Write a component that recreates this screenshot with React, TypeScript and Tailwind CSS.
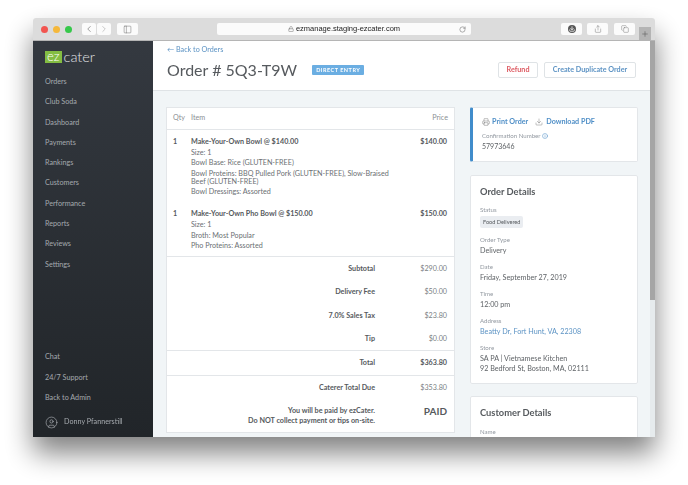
import { ChevronLeft, ChevronRight, Copy, Info, Lock, PanelLeft, Plus, Printer, RotateCw, Share, Download, UserCircle } from "lucide-react";

const topNav = ["Orders", "Club Soda", "Dashboard", "Payments", "Rankings", "Customers", "Performance", "Reports", "Reviews", "Settings"];
const bottomNav = ["Chat", "24/7 Support", "Back to Admin"];

const totals = [
  { label: "Subtotal", value: "$290.00" },
  { label: "Delivery Fee", value: "$50.00" },
  { label: "7.0% Sales Tax", value: "$23.80" },
  { label: "Tip", value: "$0.00" },
];

const Field = ({ label, children }: { label: string; children: React.ReactNode }) => (
  <div className="mt-[7px]">
    <div className="text-[6.1px] leading-[8px] text-[#9298a0]">{label}</div>
    <div className="mt-[2px] text-[7.2px] leading-[10px] text-[#5f6367]">{children}</div>
  </div>
);

const ToolButton = ({ children, className = "" }: { children: React.ReactNode; className?: string }) => (
  <div className={`flex h-[12px] items-center justify-center rounded-[2px] bg-[#fbfbfb] text-[#666] ${className}`}>{children}</div>
);

export default function App() {
  return (
    <div className="h-[485px] w-[688px] overflow-hidden bg-white pl-[33px] pt-[18px] font-['Lato','Liberation_Sans',sans-serif]">
      <div className="flex h-[419px] w-[622px] flex-col overflow-hidden rounded-t-[3px] opacity-[0.995] shadow-[0_16px_28px_rgba(0,0,0,0.5)] blur-[0.3px]">
        <div className="flex h-[23px] shrink-0 items-center border-b border-[#b5b5b5] bg-[#dcdcdc] pl-[8px]">
          <div className="flex gap-[5px]">
            <span className="size-[7px] rounded-full bg-[#f2544f]" />
            <span className="size-[7px] rounded-full bg-[#f5b83a]" />
            <span className="size-[7px] rounded-full bg-[#35c84a]" />
          </div>
          <div className="ml-[10px] flex gap-px">
            <ToolButton className="w-[14px]"><ChevronLeft size={10} strokeWidth={1.5} /></ToolButton>
            <ToolButton className="w-[14px] text-[#aaa]"><ChevronRight size={10} strokeWidth={1.5} /></ToolButton>
          </div>
          <ToolButton className="ml-[6px] w-[21px]"><PanelLeft size={9} strokeWidth={1.25} /></ToolButton>
          <div className="relative ml-[79px] flex h-[12px] w-[254px] items-center justify-center rounded-[2px] bg-[#fbfbfb] text-[7.5px] text-[#222]">
            <Lock size={6} className="mr-[2px] text-[#777]" />
            <span className="font-['Liberation_Sans',sans-serif]">ezmanage.staging-ezcater.com</span>
            <RotateCw size={7} className="absolute right-[5px] text-[#777]" />
          </div>
          <ToolButton className="ml-[90px] w-[21px]">
            <span className="flex size-[8px] items-center justify-center rounded-full bg-[#555]">
              <Download size={6} strokeWidth={3} className="text-white" />
            </span>
          </ToolButton>
          <ToolButton className="ml-[5px] w-[21px]"><Share size={8} strokeWidth={1.25} /></ToolButton>
          <ToolButton className="ml-[6px] w-[21px]"><Copy size={8} strokeWidth={1.25} /></ToolButton>
          <div className="ml-[4px] mt-[9px] flex h-[14px] w-[12px] items-center justify-center bg-[#b4b4b4] text-[#666]">
            <Plus size={8} />
          </div>
        </div>

        <div className="flex min-h-0 flex-1">
          <aside className="flex w-[120px] shrink-0 flex-col bg-gradient-to-b from-[#33383f] to-[#202428] pl-[12px] text-[7.2px] text-[#a4a9ae]">
            <div className="mt-[8px] flex h-[15px] items-center">
              <span className="flex h-[12px] items-center bg-[#84bd41] px-[2px] text-[13px] font-light text-white">ez</span>
              <span className="ml-[2px] text-[14.5px] font-light text-[#e2e4e6]">cater</span>
            </div>
            <nav className="mt-[13px] flex flex-col gap-[10.3px]">
              {topNav.map((item) => (
                <a key={item} className="leading-[10px]">{item}</a>
              ))}
            </nav>
            <nav className="mt-auto flex flex-col gap-[10.5px]">
              {bottomNav.map((item) => (
                <a key={item} className="leading-[10px]">{item}</a>
              ))}
            </nav>
            <div className="mb-[8px] mt-[13px] flex items-center gap-[6px]">
              <UserCircle size={13} strokeWidth={1} className="text-[#c4c8cc]" />
              <span>Donny Pfannerstill</span>
            </div>
          </aside>

          <main className="flex min-w-0 flex-1 bg-[#f1f5f7]">
            <div className="min-w-0 flex-1">
              <header className="h-[50px] border-b border-[#dfe3e6] bg-white pl-[14px] pr-[14px]">
                <a className="flex h-[17px] items-center pt-[1px] text-[7.2px] text-[#5c93c4]">← Back to Orders</a>
                <div className="flex h-[24px] items-center">
                  <h1 className="text-[16px] text-[#55595d]">Order # 5Q3-T9W</h1>
                  <span className="ml-[15px] flex h-[10px] items-center rounded-[1px] bg-[#6aaee2] px-[4px] text-[5.5px] font-bold tracking-[0.5px] text-white">DIRECT ENTRY</span>
                  <button className="ml-auto h-[16px] w-[40px] rounded-[2px] border border-[#dfe3e6] text-[7.2px] font-bold text-[#dd5a62]">Refund</button>
                  <button className="ml-[6px] h-[16px] w-[92px] rounded-[2px] border border-[#dfe3e6] text-[7.2px] font-bold text-[#5c93c4]">Create Duplicate Order</button>
                </div>
              </header>

              <div className="flex h-[346px] gap-[15px] overflow-hidden pl-[13px] pt-[16px]">
                <section className="h-[326px] w-[289px] shrink-0 border border-[#e3e6e9] bg-white text-[7.2px] text-[#6b6f73]">
                  <div className="flex h-[22px] items-center border-b border-[#e3e6e9] px-[6px] pb-[1px] text-[#8b9094]">
                    <span className="w-[18px]">Qty</span>
                    <span>Item</span>
                    <span className="ml-auto">Price</span>
                  </div>
                  <div className="flex h-[127px] flex-col gap-[14px] border-b border-[#e3e6e9] pl-[6px] pr-[7px] pt-[8px] leading-[8px]">
                    <div className="flex">
                      <span className="w-[18px] font-bold text-[#55595d]">1</span>
                      <div className="flex w-[200px] flex-col gap-[2.6px]">
                        <b className="text-[#55595d]">Make-Your-Own Bowl @ $140.00</b>
                        <span>Size: 1</span>
                        <span>Bowl Base: Rice (GLUTEN-FREE)</span>
                        <span>Bowl Proteins: BBQ Pulled Pork (GLUTEN-FREE), Slow-Braised Beef (GLUTEN-FREE)</span>
                        <span>Bowl Dressings: Assorted</span>
                      </div>
                      <b className="ml-auto text-[#55595d]">$140.00</b>
                    </div>
                    <div className="flex">
                      <span className="w-[18px] font-bold text-[#55595d]">1</span>
                      <div className="flex flex-col gap-[2.6px]">
                        <b className="text-[#55595d]">Make-Your-Own Pho Bowl @ $150.00</b>
                        <span>Size: 1</span>
                        <span>Broth: Most Popular</span>
                        <span>Pho Proteins: Assorted</span>
                      </div>
                      <b className="ml-auto text-[#55595d]">$150.00</b>
                    </div>
                  </div>
                  <div className="flex h-[94px] flex-col justify-between border-b border-[#e3e6e9] py-[7px] pr-[7px] leading-[9px]">
                    {totals.map((row) => (
                      <div key={row.label} className="flex justify-end">
                        <b className="text-[#55595d]">{row.label}</b>
                        <span className="w-[72px] text-right text-[#7b7f83]">{row.value}</span>
                      </div>
                    ))}
                  </div>
                  <div className="flex h-[25px] items-center justify-end border-b border-[#e3e6e9] pr-[7px] font-bold text-[#55595d]">
                    <span>Total</span>
                    <span className="w-[72px] text-right">$363.80</span>
                  </div>
                  <div className="pr-[7px] pt-[7px]">
                    <div className="flex justify-end">
                      <b className="text-[#55595d]">Caterer Total Due</b>
                      <span className="w-[72px] text-right text-[#7b7f83]">$353.80</span>
                    </div>
                    <div className="mt-[12px] flex justify-end">
                      <b className="text-right leading-[10px] text-[#55595d]">You will be paid by ezCater.<br />Do NOT collect payment or tips on-site.</b>
                      <span className="w-[72px] text-right text-[10px] font-bold leading-[10px] text-[#55595d]">PAID</span>
                    </div>
                  </div>
                </section>

                <div className="flex w-[168px] shrink-0 flex-col">
                  <section className="h-[55px] shrink-0 rounded-[2px] border border-l-[3px] border-[#e3e6e9] border-l-[#3f8ccb] bg-white pl-[9px] pt-[9px]">
                    <div className="flex items-center text-[7.2px] font-bold text-[#4f8fc7]">
                      <Printer size={8} strokeWidth={1.25} className="text-[#666]" />
                      <span className="ml-[2px]">Print Order</span>
                      <Download size={8} strokeWidth={1.25} className="ml-[7px] text-[#666]" />
                      <span className="ml-[3px]">Download PDF</span>
                    </div>
                    <div className="mt-[4px] flex items-center gap-[1px] text-[6.1px] leading-[8px] text-[#9298a0]">
                      Confirmation Number <Info size={6} className="text-[#4f8fc7]" />
                    </div>
                    <div className="mt-[1px] text-[7px] leading-[10px] text-[#5f6367]">57973646</div>
                  </section>

                  <section className="mt-[13px] h-[209px] shrink-0 rounded-[2px] border border-[#e3e6e9] bg-white pl-[9px] pt-[10px]">
                    <h2 className="text-[9.3px] font-bold leading-[12px] text-[#55595d]">Order Details</h2>
                    <div className="mt-[8px] text-[6.1px] leading-[8px] text-[#9298a0]">Status</div>
                    <span className="mb-[8px] mt-[2px] block w-fit rounded-[2px] bg-[#eaedf1] px-[3px] text-[5.6px] leading-[12px] text-[#55595d]">Food Delivered</span>
                    <Field label="Order Type">Delivery</Field>
                    <Field label="Date">Friday, September 27, 2019</Field>
                    <Field label="Time">12:00 pm</Field>
                    <Field label="Address"><span className="text-[#5c93c4]">Beatty Dr, Fort Hunt, VA, 22308</span></Field>
                    <Field label="Store">SA PA | Vietnamese Kitchen<br />92 Bedford St, Boston, MA, 02111</Field>
                  </section>

                  <section className="mt-[12px] h-[60px] shrink-0 rounded-[2px] border border-[#e3e6e9] bg-white pl-[9px] pt-[10px]">
                    <h2 className="text-[9.3px] font-bold leading-[12px] text-[#55595d]">Customer Details</h2>
                    <div className="mt-[9px] text-[6.1px] leading-[8px] text-[#9298a0]">Name</div>
                  </section>
                </div>
              </div>
            </div>
            <div className="flex w-[5px] shrink-0 flex-col bg-[#e6ebed]">
              <div className="h-[259px] bg-[#a5a5a5]" />
            </div>
          </main>
        </div>
      </div>
    </div>
  );
}
